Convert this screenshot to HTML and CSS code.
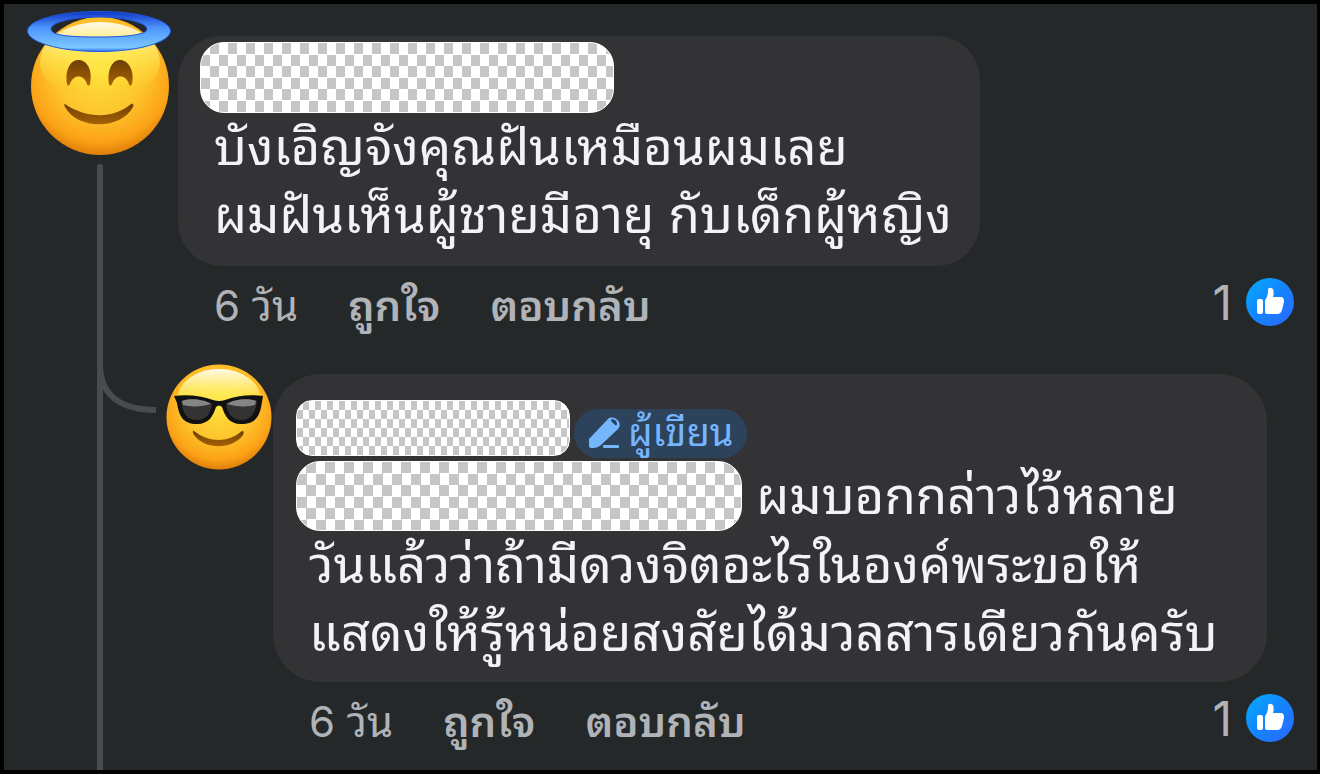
FILE: index.html
```html
<!DOCTYPE html>
<html lang="th">
<head>
  <meta charset="UTF-8" />
  <meta name="viewport" content="width=device-width, initial-scale=1.0" />
  <title>ความคิดเห็น</title>
  <link rel="stylesheet" href="styles.css">
</head>
<body>
  <main class="thread">
    <article class="comment">
      <div class="side">
        <svg class="avatar" viewBox="0 0 144 146" aria-hidden="true">
          <defs>
            <radialGradient id="skin" cx="50%" cy="38%" r="64%">
              <stop offset="0" stop-color="#ffe03a" />
              <stop offset="0.5" stop-color="#fdc62e" />
              <stop offset="0.82" stop-color="#fca216" />
              <stop offset="1" stop-color="#d97706" />
            </radialGradient>
            <linearGradient id="shine" x1="0" y1="0" x2="0" y2="1">
              <stop offset="0" stop-color="#fff" stop-opacity="0.9" />
              <stop offset="0.4" stop-color="#fff76a" stop-opacity="0.6" />
              <stop offset="0.85" stop-color="#ffe936" stop-opacity="0" />
            </linearGradient>
            <linearGradient id="brown" x1="0" y1="0" x2="0" y2="1">
              <stop offset="0" stop-color="#6f3f05" />
              <stop offset="1" stop-color="#a56105" />
            </linearGradient>
            <linearGradient id="halo" x1="0" y1="0" x2="0" y2="1">
              <stop offset="0" stop-color="#0c36c4" />
              <stop offset="0.4" stop-color="#4c93fb" />
              <stop offset="0.9" stop-color="#7cc8ff" />
              <stop offset="1" stop-color="#2f6ff0" />
            </linearGradient>
          </defs>
          <circle cx="73" cy="76" r="69" fill="url(#skin)" />
          <ellipse cx="73" cy="52" rx="60" ry="40" fill="url(#shine)" />
          <path fill="url(#halo)" fill-rule="evenodd" stroke="#1f55e0" stroke-width="1" d="M72 1.500C112 1.500 143.500 10 143.500 21S112 41.500 72 41.500 0.500 32 0.500 21 32 1.500 72 1.500ZM72 7C46 7 24 12 24 19S46 27 72 27 120 25 120 19 98 7 72 7Z" />
          <path fill="url(#brown)" d="M40 74C38 60 43 50 51.500 50S66 60 63 74C62 76 60.500 76 60 74 57 64 46 64 43 74 42 76 40.500 76 40 74ZM82 74C80 60 85 50 93 50S108 60 105 74C104 76 102.500 76 102 74 99 64 88 64 85 74 84 76 82.500 76 82 74Z" />
          <path fill="url(#brown)" d="M38 94C60 109 86 109 104 94 106 93 107 94 106 97 94 120 50 120 38 97 37 95 37 94 38 94Z" />
        </svg>
      </div>
      <div class="content">
        <div class="bubble">
          <div class="patch patch-author"></div>
          <p>บังเอิญจังคุณฝันเหมือนผมเลย<br>ผมฝันเห็นผู้ชายมีอายุ กับเด็กผู้หญิง</p>
        </div>
        <div class="meta">
          <span class="time">6 วัน</span>
          <button type="button">ถูกใจ</button>
          <button type="button">ตอบกลับ</button>
          <span class="count">1</span>
          <svg class="like" viewBox="0 0 48 48" aria-hidden="true">
            <defs>
              <linearGradient id="blue" x1="0" y1="0" x2="1" y2="1">
                <stop offset="0" stop-color="#02adfc" />
                <stop offset="0.5" stop-color="#1484ff" />
                <stop offset="1" stop-color="#2b67ff" />
              </linearGradient>
            </defs>
            <circle cx="24" cy="24" r="24" fill="url(#blue)" />
            <rect x="11" y="21" width="6" height="15" rx="2" fill="#fff" />
            <path fill="#fff" d="M19 22Q22 19 22 12C22 9 27 9 27.500 13Q28 16 27 19H35C38 19 38.500 22 37.500 26L36 32Q35 36 31 36H21Q19 36 19 34Z" />
          </svg>
        </div>
      </div>
    </article>

    <article class="comment reply">
      <svg class="branch" viewBox="0 0 60 50" aria-hidden="true">
        <path d="M3 0C3 30 22 46 59 46" />
      </svg>
      <div class="side">
        <svg class="avatar" viewBox="0 0 106 106" aria-hidden="true">
          <circle cx="53" cy="53" r="52.500" fill="url(#skin)" />
          <ellipse cx="53" cy="36" rx="42" ry="31" fill="url(#shine)" />
          <path fill="#111" d="M8 32C22 30 36 32 47 36Q53 38 59 36C70 32 84 30 97 32L96 38C94 52 90 60 75 60 63 60 59 52 56 43Q53 40 50 43C47 52 43 60 31 60 17 60 13 52 11 39Z" />
          <path fill="#333" d="M15 37C22 34 38 35 46 40 45 49 40 56 31 56 20 56 17 49 15 37ZM60 40C68 35 84 34 91 37 89 49 86 56 75 56 66 56 61 49 60 40Z" />
          <path fill="#858585" d="M16 37C23 34 38 35 45 40 36 43 24 43 17 41ZM61 40C68 35 83 34 90 37L89 41C82 43 70 43 61 40Z" />
          <path fill="url(#brown)" d="M28 67C43 79 62 79 76 67 78 67 78 69 77 71 66 86 39 86 28 71 26 68 27 66 28 67Z" />
        </svg>
      </div>
      <div class="content">
        <div class="bubble">
          <div class="author">
            <div class="patch patch-name"></div>
            <span class="badge">
              <svg viewBox="0 0 32 32" aria-hidden="true">
                <path fill="currentColor" fill-rule="evenodd" d="M1 23 20 3C25-2 36 6 30 13L13 29Q10 32 6 32H3Q1 32 1 30ZM24 3Q22 4 24 6L27 9Q29 10 29 8 29 4 24 3Z" />
                <rect x="15" y="29" width="16" height="3" rx="1" fill="currentColor" />
              </svg>
              ผู้เขียน
            </span>
          </div>
          <p><span class="patch patch-mention"></span> ผมบอกกล่าวไว้หลาย<br>วันแล้วว่าถ้ามีดวงจิตอะไรในองค์พระขอให้<br>แสดงให้รู้หน่อยสงสัยได้มวลสารเดียวกันครับ</p>
        </div>
        <div class="meta">
          <span class="time">6 วัน</span>
          <button type="button">ถูกใจ</button>
          <button type="button">ตอบกลับ</button>
          <span class="count">1</span>
          <svg class="like" viewBox="0 0 48 48" aria-hidden="true">
            <circle cx="24" cy="24" r="24" fill="url(#blue)" />
            <rect x="11" y="21" width="6" height="15" rx="2" fill="#fff" />
            <path fill="#fff" d="M19 22Q22 19 22 12C22 9 27 9 27.500 13Q28 16 27 19H35C38 19 38.500 22 37.500 26L36 32Q35 36 31 36H21Q19 36 19 34Z" />
          </svg>
        </div>
      </div>
    </article>
  </main>
</body>
</html>
```

FILE: styles.css
```css
* {
  box-sizing: border-box;
}

body {
  margin: 0;
  background: #000;
  color: #f2f3f7;
  font-family: Inter, "Noto Sans Thai Looped", "Noto Looped Thai", Loma, Waree, Garuda, "Noto Sans Thai", "Noto Sans", sans-serif;
}

.thread {
  position: relative;
  min-height: 100vh;
  border: 4px solid #000;
  border-width: 4px 3px 4px 4px;
  background: #252829;
  overflow: hidden;
}

/* vertical line under the first avatar */
.thread::before {
  content: "";
  position: absolute;
  top: 160px;
  bottom: 0;
  left: 93px;
  width: 6px;
  border-radius: 3px 3px 0 0;
  background: #4a4b4e;
}

.comment {
  position: relative;
  display: flex;
  padding: 32px 23px 0 23px;
}

.side {
  flex: none;
  width: 144px;
  margin: -26px 7px 0 0;
}

.avatar {
  display: block;
  width: 100%;
}

.content {
  flex: 1;
}

.bubble {
  width: fit-content;
  padding: 6px 28px 17px 36px;
  border-radius: 44px;
  background: #333335;
}

.bubble p {
  margin: 0;
  font-size: 51px;
  line-height: 68px;
  white-space: nowrap;
}

.patch {
  border: 1px solid #fff;
  border-radius: 24px;
  background: conic-gradient(#c6c6c6 25%, #fff 0 50%, #c6c6c6 0 75%, #fff 0) 0 0 / 18px 23px;
}

.patch-author {
  width: 414px;
  height: 71px;
  margin-left: -14px;
}

.meta {
  display: flex;
  align-items: flex-start;
  height: 80px;
  padding: 12px 0 0 36px;
  color: #b0b3b8;
  font-size: 42px;
  line-height: 56px;
}

.meta button {
  margin: 0 0 0 50px;
  padding: 0;
  border: none;
  background: none;
  color: inherit;
  font: inherit;
  font-weight: 600;
  cursor: pointer;
}

.count {
  margin-left: auto;
  font-size: 48px;
  line-height: 50px;
}

.like {
  width: 48px;
  height: 48px;
  margin-left: 14px;
}

/* reply */
.reply {
  padding: 28px 23px 0 162px;
}

.reply .side {
  width: 106px;
  margin: -10px 1px 0 0;
}

.reply .bubble {
  padding: 26px 49px 15px 36px;
  border-radius: 48px;
}

.branch {
  position: absolute;
  top: 18px;
  left: 93px;
  width: 60px;
  height: 50px;
  fill: none;
  stroke: #4a4b4e;
  stroke-width: 6px;
}

.author {
  display: flex;
  align-items: flex-end;
  gap: 4px;
  height: 58px;
  margin: 0 0 3px -13px;
}

.patch-name {
  width: 274px;
  height: 56px;
  margin-bottom: 2px;
  border-radius: 16px;
  background-size: 12px 18px;
}

.patch-mention {
  display: inline-block;
  width: 446px;
  height: 70px;
  margin-left: -13px;
  vertical-align: -17px;
  background-size: 19px 23px;
}

.badge {
  display: flex;
  align-items: center;
  gap: 8px;
  height: 49px;
  padding: 0 14px 4px;
  border-radius: 25px;
  background: #2d435c;
  color: #75b6ff;
  font-size: 38px;
  line-height: 40px;
}

.badge svg {
  width: 32px;
  height: 32px;
}
```
